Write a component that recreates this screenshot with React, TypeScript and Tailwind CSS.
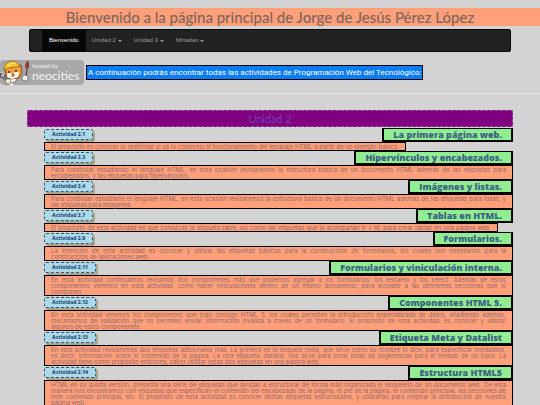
import React from "react";

type Activity = { id: string; title: string; lines: string[]; width?: string };

const activities: Activity[] = [
  {
    id: "2.1",
    title: "La primera página web.",
    width: "w-[362px]",
    lines: [
      "El propósito es conocer (o reafirmar si ya lo conoces) el funcionamiento del lenguaje HTML a partir de un ejemplo básico.",
    ],
  },
  {
    id: "2.3",
    title: "Hipervínculos y encabezados.",
    lines: [
      "Para continuar estudiando el lenguaje HTML, en esta ocasión revisaremos la estructura básica de un documento HTML además de las etiquetas para",
      "encabezados, y las etiquetas para hipervínculos.",
    ],
  },
  {
    id: "2.4",
    title: "Imágenes y listas.",
    lines: [
      "Para continuar estudiante el lenguaje HTML, en esta ocasión revisaremos la estructura básica de un documento HTML además de las etiquetas para listas, y",
      "las etiquetas para imágenes.",
    ],
  },
  {
    id: "2.7",
    title: "Tablas en HTML.",
    width: "w-[454px]",
    lines: [
      "El propósito de esta actividad es que conozcas la etiqueta table, así como las etiquetas que la acompañan tr y td, para crear tablas en una página web.",
    ],
  },
  {
    id: "2.9",
    title: "Formularios.",
    lines: [
      "La intención de esta actividad es conocer y utilizar las etiquetas básicas para la construcción de formularios, los cuales son necesarios para la",
      "construcción de aplicaciones web.",
    ],
  },
  {
    id: "2.11",
    title: "Formularios y viniculación interna.",
    lines: [
      "En esta actividad continuamos revisando dos componentes más que podemos agregar a los formularios: los textarea y los select. Además de estos",
      "componentes veremos en esta actividad, cómo hacer vinculaciones dentro de un mismo documento, para acceder a las diferentes secciones que lo",
      "componen.",
    ],
  },
  {
    id: "2.12",
    title: "Componentes HTML 5.",
    lines: [
      "En esta actividad veremos los componentes que trajo consigo HTML 5, los cuales permiten la introducción especializada de datos, añadiendo además,",
      "mecanísmos de validación que no permiten enviar información inválida a través de un formulario. El propósito de esta actividad, es conocer y utilizar",
      "algunos de estos componentes.",
    ],
  },
  {
    id: "2.13",
    title: "Etiqueta Meta y Datalist",
    lines: [
      "En esta actividad revisaremos dos etiquetas adicionales más. La primera es la etiqueta meta, que sirve como su nombre lo dice, para especificar metadatos,",
      "es decir, información sobre el contenido de la página. La otra etiqueta, datalist, nos sirve para crear listas de sugerencias para el llenado de un input. La",
      "actividad tiene como propósito entonces, saber utilizar estas dos etiquetas en una página web.",
    ],
  },
  {
    id: "2.14",
    title: "Estructura HTML5",
    lines: [
      "HTML en su quinta versión, presenta una serie de etiquetas que ayudan a estructurar de forma más organizada el esqueleto de un documento web. De esta",
      "manera nos encontramos con etiquetas que especifican el contenido del encabezado de la página, el pie de la página, el contenido principal, las secciones de",
      "este contenido principal, etc. El propósito de esta actividad es conocer dichas etiquetas estructurales, y utilizarlas para mejorar la distribución de nuestra",
      "página web.",
    ],
  },
];

const menus = ["Unidad 2", "Unidad 3", "Miriadax"];

function NeocitiesCat() {
  return (
    <svg viewBox="0 0 30 26" className="h-[26px] w-[30px] shrink-0" aria-hidden="true">
      <path d="M1 13l3 2 4 4-1 2-4-3-3-1z" fill="#888" stroke="#333" strokeWidth=".7" />
      <path d="M1 12l3 3M1 16l3-1" stroke="#eee" strokeWidth=".9" />
      <path d="M26 17l1-9" stroke="#7a3b28" strokeWidth="1.4" />
      <path d="M25.500 7q-.5-4 2.500-6 1.500 4 .3 7z" fill="#a8352b" stroke="#522" strokeWidth=".5" />
      <path d="M9 15l9 1-2 5-5 2-4 1-2-2 4-3z" fill="#fff" stroke="#5b4634" strokeWidth=".6" />
      <path d="M5 7l1 9 5 3 8-1 3-5-1-8-4 1z" fill="#f39a3e" stroke="#5b3517" strokeWidth=".8" />
      <path d="M7 14q3-2 5 0 3-3 7-2l-1 5-6 2-5-2z" fill="#fff3df" />
      <path d="M4 9q1-8 9-8 5 0 6 4l2 1-5 1q-6 0-12 3z" fill="#f6c62d" stroke="#8a6414" strokeWidth=".8" />
      <path d="M8 6q3-3 7-3" stroke="#fff0a0" strokeWidth=".9" fill="none" />
      <path d="M9 11v2M16 10v2" stroke="#222" strokeWidth="1.300" />
      <path d="M12 14l2 0-1 1zM11 16q2 1 4-1" fill="#603020" stroke="#603020" strokeWidth=".5" />
      <circle cx="8" cy="21.500" r="2.800" fill="#fff" stroke="#444" strokeWidth=".7" />
      <circle cx="8" cy="22" r="1.200" fill="#f6c27a" />
      <circle cx="25" cy="18" r="3" fill="#fff" stroke="#555" strokeWidth=".7" />
      <circle cx="24.500" cy="18" r="1.400" fill="#f7dfc0" />
      <path d="M11 23l2 2M9 24l3 1" stroke="#eee" strokeWidth="1.200" />
    </svg>
  );
}

function ActivityItem({ id, title, lines, width }: Activity) {
  return (
    <article>
      <div className="flex h-[14px] items-start justify-between">
        <a
          href={"#actividad-" + id}
          className="mt-px h-[11px] rounded-[2px] border border-dashed border-[#31577f] bg-[#add8e6] px-[7px] font-['Open_Sans',sans-serif] text-[5px] leading-[9px] font-extrabold whitespace-nowrap text-[#2c5584] shadow-[2px_2px_0_#aaa58c]"
        >
          Actividad {id}
        </a>
        <h3 className="h-[14px] border-2 border-t-1 border-black bg-[#90ee90] px-[9px] font-['Open_Sans',sans-serif] text-[9px] leading-[11px] font-extrabold whitespace-nowrap text-[#3c6186]">
          {title}
        </h3>
      </div>
      <p
        className={
          "border border-black bg-[#ffa07a] px-[6px] pt-px font-['Inter',sans-serif] text-[6px] leading-[6px] whitespace-nowrap text-[#94696a] " +
          (width ?? "")
        }
      >
        {lines.map((line, i) => (
          <span
            key={i}
            className={"block " + (width || i < lines.length - 1 ? "[text-align-last:justify]" : "")}
          >
            {line}
          </span>
        ))}
      </p>
    </article>
  );
}

export default function App() {
  return (
    <div className="h-screen overflow-hidden bg-[#d3d3d3] pt-2">
      <h1 className="h-[18px] bg-[#ffa07a] text-center font-['Lato',sans-serif] text-[15px] leading-[18px] font-medium whitespace-nowrap text-[#7d655c]">
        Bienvenido a la página principal de Jorge de Jesús Pérez López
      </h1>

      <nav className="mx-[29px] mt-[3px] flex h-[23px] rounded-[2px] border border-[#080808] bg-[#222] pl-[12px] font-['Liberation_Sans',sans-serif] text-[6px] leading-[21px]">
        <a href="#inicio" className="bg-[#080808] px-[7px] text-white">
          Bienvenido
        </a>
        {menus.map((m) => (
          <button key={m} type="button" className="flex items-center gap-[2px] px-[6px] text-[#9d9d9d]">
            {m}
            <span className="h-0 w-0 border-x-2 border-t-2 border-x-transparent border-t-[#9d9d9d]" />
          </button>
        ))}
      </nav>

      <div className="mt-2 flex items-center gap-[2px]">
        <a
          href="#neocities"
          className="flex h-[25px] w-[84px] shrink-0 items-center gap-[2px] rounded-[4px] bg-[#a8a8a8] font-['Lato',sans-serif] text-[#f4f4f4]"
        >
          <NeocitiesCat />
          <span className="flex flex-col">
            <span className="text-[6px] leading-[7px]">hosted by</span>
            <span className="text-[12px] leading-[14px]">neocities</span>
          </span>
        </a>
        <p className="h-[15px] border border-black bg-[#0a7df5] px-px font-['Roboto',sans-serif] text-[8px] leading-[13px] whitespace-nowrap text-white">
          A continuación podrás encontrar todas las actividades de Programación Web del Tecnológico:
        </p>
      </div>

      <hr className="mt-2 border-[#e8e8e8]" />

      <main className="mx-[27px] mt-4">
        <h2 className="h-[17px] border border-dashed border-[#a04fa0] bg-[#800080] text-center font-['Lato',sans-serif] text-[11px] leading-[16px] font-light text-[#6272dc]">
          Unidad 2
        </h2>
        <div className="mt-px ml-[17px]">
          {activities.map((a) => (
            <ActivityItem key={a.id} {...a} />
          ))}
        </div>
      </main>
    </div>
  );
}
